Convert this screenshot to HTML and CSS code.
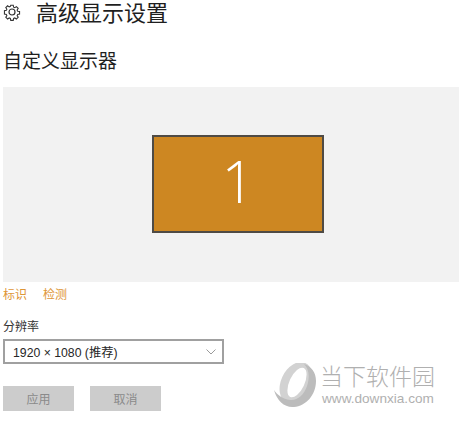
FILE: index.html
```html
<!DOCTYPE html>
<html lang="zh-CN">
<head>
  <meta charset="UTF-8">
  <title>高级显示设置</title>
  <link rel="stylesheet" href="styles.css">
</head>
<body>

  <div class="page-title">
    <svg class="gear" width="18" height="18" viewBox="0 0 18 18" fill="none" stroke="#333333" stroke-width="1.2">
      <path d="M7.6 1.5h2.8l.4 2.1 1.3.6 1.8-1.2 2 2-1.2 1.8.6 1.3 2.1.4v2.8l-2.1.4-.6 1.3 1.2 1.8-2 2-1.8-1.2-1.3.6-.4 2.1H7.6l-.4-2.1-1.3-.6-1.8 1.2-2-2 1.2-1.8-.6-1.3-2.1-.4V7.6l2.1-.4.6-1.3-1.2-1.8 2-2 1.8 1.2 1.3-.6z" transform="translate(.9 .9) scale(.9)"/>
      <circle cx="9" cy="9" r="3"/>
    </svg>
    <h1>高级显示设置</h1>
  </div>

  <h2 class="section-title">自定义显示器</h2>

  <div class="display-panel">
    <div class="monitor">1</div>
  </div>

  <div class="links">
    <a>标识</a>
    <a>检测</a>
  </div>

  <div class="field-label">分辨率</div>
  <div class="select">
    <span>1920 × 1080 (推荐)</span>
    <svg width="10" height="6" viewBox="0 0 10 6" fill="none" stroke="#9a9a9a" stroke-width="1">
      <path d="M.5 .5L5 5l4.5-4.5"/>
    </svg>
  </div>

  <div class="buttons">
    <div class="btn">应用</div>
    <div class="btn">取消</div>
  </div>

  <!-- site watermark, sits over the page -->
  <div class="watermark">
    <svg class="wm-logo" width="44" height="46" viewBox="0 0 44 46">
      <ellipse cx="22" cy="20" rx="15" ry="22" transform="rotate(25 22 20)" fill="#d2d2d2"/>
      <path d="M0 27C3 38 11 45 20 44C32 43 42 32 42 18C42 9 37 3 30 1C35 6 36 14 33 23C30 32 23 38 16 37C9 36 3 32 0 27Z" fill="#bcbcbc"/>
      <ellipse cx="23" cy="19.5" rx="7.5" ry="16" transform="rotate(25 23 19.5)" fill="#ffffff"/>
    </svg>
    <div class="wm-text">
      <div class="wm-name">当下软件园</div>
      <div class="wm-url">www.downxia.com</div>
    </div>
  </div>

</body>
</html>
```

FILE: styles.css
```css
body {
  margin: 0;
  width: 459px;
  height: 428px;
  overflow: hidden;
  position: relative;
  background-color: #ffffff;
  color: #1f1f1f;
  font-family: "Noto Sans CJK SC", "Liberation Sans", sans-serif;
}

.page-title {
  display: flex;
  align-items: center;
  height: 22px;
  padding-left: 3px;
}

.gear {
  flex: none;
  margin-right: 15px;
  margin-top: 1px;
}

h1 {
  margin: 0;
  font-size: 22px;
  font-weight: 400;
  line-height: 22px;
}

.section-title {
  margin: 27px 0 0 3px;
  font-size: 19px;
  font-weight: 400;
  line-height: 22px;
}

.display-panel {
  display: flex;
  justify-content: center;
  align-items: center;
  margin: 16px 0 0 3px;
  height: 195px;
  background-color: #f2f2f2;
}

.monitor {
  box-sizing: border-box;
  width: 172px;
  height: 98px;
  margin-left: 14px;
  margin-top: -1px;
  border: 2px solid #4f4b45;
  background-color: #cd8722;
  color: #ffffff;
  text-align: center;
  font-family: "Open Sans", "Liberation Sans", sans-serif;
  font-size: 58px;
  font-weight: 300;
  line-height: 88px;
}

.links {
  display: flex;
  gap: 16px;
  margin: 4px 0 0 3px;
  font-size: 12px;
  line-height: 16px;
  color: #de9637;
}

.field-label {
  margin: 16px 0 0 3px;
  font-size: 12px;
  line-height: 16px;
  color: #333333;
}

.select {
  box-sizing: border-box;
  display: flex;
  justify-content: space-between;
  align-items: center;
  width: 221px;
  height: 25px;
  margin: 5px 0 0 3px;
  padding: 0 6px 0 8px;
  border: 2px solid #a0a0a0;
  font-family: "Liberation Sans", "Noto Sans CJK SC", sans-serif;
  font-size: 12.25px;
  color: #262626;
}

.buttons {
  display: flex;
  gap: 16px;
  margin: 22px 0 0 3px;
}

.btn {
  width: 71px;
  height: 25px;
  background-color: #cccccc;
  color: #8a8a8a;
  text-align: center;
  font-size: 12px;
  line-height: 25px;
}

.watermark {
  position: absolute;
  left: 274px;
  top: 362px;
  display: flex;
  gap: 2px;
}

.wm-logo {
  margin-top: 1px;
}

.wm-text {
  color: #b0b0b0;
}

.wm-name {
  font-size: 23px;
  font-weight: 300;
  line-height: 26px;
  white-space: nowrap;
}

.wm-url {
  margin-top: 3px;
  margin-left: 2px;
  font-family: "Liberation Sans", sans-serif;
  font-size: 13.6px;
  line-height: 16px;
  white-space: nowrap;
}
```
